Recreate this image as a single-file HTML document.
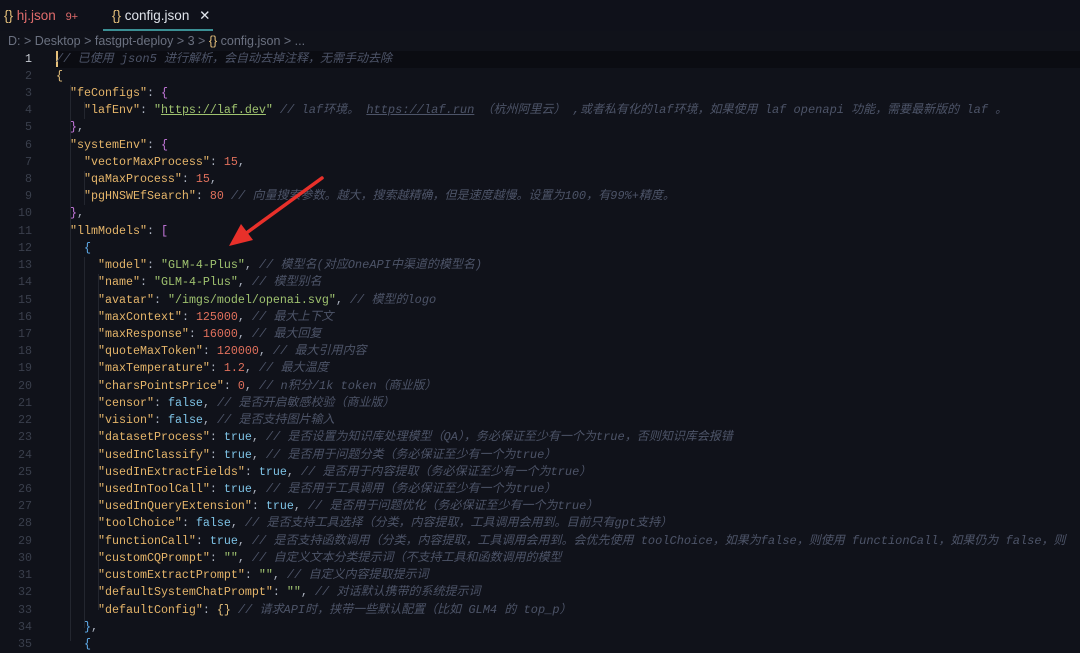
<!DOCTYPE html>
<html><head><meta charset="utf-8"><style>
html,body{margin:0;padding:0;width:1080px;height:641px;overflow:hidden;background:#10121a;font-family:"Liberation Sans","Noto Sans CJK SC",sans-serif}
.tabs{position:absolute;left:0;top:0;width:1080px;height:31px;background:#0f111a}
.tab{position:absolute;top:0;height:31px;line-height:31px;font-size:13.5px}
.bc{position:absolute;top:32px;left:8px;font-size:12.5px;color:#6b7180;line-height:18px;white-space:pre}
.ln{position:absolute;left:0;width:32px;text-align:right;font:11.67px/17.22px "Liberation Mono",monospace;color:#3a3f4c;top:50.5px}
.code{position:absolute;left:56px;top:50.5px;font:11.67px/17.22px "Liberation Mono","Noto Sans CJK SC",monospace;color:#abb2bf;white-space:pre}
.cur{position:absolute;left:56px;top:50.5px;width:1024px;height:17.22px;background:#0b0c12}
.k{color:#e5b56a}.s{color:#9fc26f}.n{color:#e0705c}.b{color:#7ec3e6}.c{color:#4d5468;font-style:italic;font-size:12px}
.y{color:#e5c07b}.p{color:#c678dd}.bl{color:#61afef}.u{text-decoration:underline}
.g{position:absolute;width:1px;background:#23262f}
</style></head><body>
<div class="tabs">
<div class="tab" style="left:4px;color:#e06c6c"><span style="color:#e5c07b">{}</span> hj.json <span style="font-size:11px;margin-left:6px">9+</span></div>
<div class="tab" style="left:112px;color:#dfe3ea"><span style="color:#e5c07b">{}</span> config.json <span style="margin-left:6px">✕</span></div>
<div style="position:absolute;left:103px;top:29px;width:110px;height:2px;background:#3b8f94"></div>
</div>
<div class="bc">D: &gt; Desktop &gt; fastgpt-deploy &gt; 3 &gt; <span style="color:#e5c07b">{}</span> config.json &gt; ...</div>
<div class="cur"></div>
<div style="position:absolute;left:56px;top:51px;width:2px;height:16px;background:#e5c07b"></div>
<div class="g" style="left:70px;top:85px;height:556px"></div>
<div class="g" style="left:84px;top:102px;height:17px"></div>
<div class="g" style="left:84px;top:171px;height:34px"></div>
<div class="g" style="left:84px;top:257px;height:371px"></div>
<div class="g" style="left:98px;top:274px;height:336px"></div>
<div class="ln"><span style="color:#c8ccd4">1</span><br>2<br>3<br>4<br>5<br>6<br>7<br>8<br>9<br>10<br>11<br>12<br>13<br>14<br>15<br>16<br>17<br>18<br>19<br>20<br>21<br>22<br>23<br>24<br>25<br>26<br>27<br>28<br>29<br>30<br>31<br>32<br>33<br>34<br>35</div>
<div class="code"><span class="c">// 已使用 json5 进行解析，会自动去掉注释，无需手动去除</span>
<span class="y">{</span>
  <span class="k">"feConfigs"</span>: <span class="p">{</span>
    <span class="k">"lafEnv"</span>: <span class="s">"<span class="u">https://laf.dev</span>"</span> <span class="c">// laf环境。 <span class="u">https://laf.run</span> （杭州阿里云） ,或者私有化的laf环境，如果使用 laf openapi 功能，需要最新版的 laf 。</span>
  <span class="p">}</span>,
  <span class="k">"systemEnv"</span>: <span class="p">{</span>
    <span class="k">"vectorMaxProcess"</span>: <span class="n">15</span>,
    <span class="k">"qaMaxProcess"</span>: <span class="n">15</span>,
    <span class="k">"pgHNSWEfSearch"</span>: <span class="n">80</span> <span class="c">// 向量搜索参数。越大，搜索越精确，但是速度越慢。设置为100，有99%+精度。</span>
  <span class="p">}</span>,
  <span class="k">"llmModels"</span>: <span class="p">[</span>
    <span class="bl">{</span>
      <span class="k">"model"</span>: <span class="s">"GLM-4-Plus"</span>, <span class="c">// 模型名(对应OneAPI中渠道的模型名)</span>
      <span class="k">"name"</span>: <span class="s">"GLM-4-Plus"</span>, <span class="c">// 模型别名</span>
      <span class="k">"avatar"</span>: <span class="s">"/imgs/model/openai.svg"</span>, <span class="c">// 模型的logo</span>
      <span class="k">"maxContext"</span>: <span class="n">125000</span>, <span class="c">// 最大上下文</span>
      <span class="k">"maxResponse"</span>: <span class="n">16000</span>, <span class="c">// 最大回复</span>
      <span class="k">"quoteMaxToken"</span>: <span class="n">120000</span>, <span class="c">// 最大引用内容</span>
      <span class="k">"maxTemperature"</span>: <span class="n">1.2</span>, <span class="c">// 最大温度</span>
      <span class="k">"charsPointsPrice"</span>: <span class="n">0</span>, <span class="c">// n积分/1k token（商业版）</span>
      <span class="k">"censor"</span>: <span class="b">false</span>, <span class="c">// 是否开启敏感校验（商业版）</span>
      <span class="k">"vision"</span>: <span class="b">false</span>, <span class="c">// 是否支持图片输入</span>
      <span class="k">"datasetProcess"</span>: <span class="b">true</span>, <span class="c">// 是否设置为知识库处理模型（QA），务必保证至少有一个为true，否则知识库会报错</span>
      <span class="k">"usedInClassify"</span>: <span class="b">true</span>, <span class="c">// 是否用于问题分类（务必保证至少有一个为true）</span>
      <span class="k">"usedInExtractFields"</span>: <span class="b">true</span>, <span class="c">// 是否用于内容提取（务必保证至少有一个为true）</span>
      <span class="k">"usedInToolCall"</span>: <span class="b">true</span>, <span class="c">// 是否用于工具调用（务必保证至少有一个为true）</span>
      <span class="k">"usedInQueryExtension"</span>: <span class="b">true</span>, <span class="c">// 是否用于问题优化（务必保证至少有一个为true）</span>
      <span class="k">"toolChoice"</span>: <span class="b">false</span>, <span class="c">// 是否支持工具选择（分类，内容提取，工具调用会用到。目前只有gpt支持）</span>
      <span class="k">"functionCall"</span>: <span class="b">true</span>, <span class="c">// 是否支持函数调用（分类，内容提取，工具调用会用到。会优先使用 toolChoice，如果为false，则使用 functionCall，如果仍为 false，则</span>
      <span class="k">"customCQPrompt"</span>: <span class="s">""</span>, <span class="c">// 自定义文本分类提示词（不支持工具和函数调用的模型</span>
      <span class="k">"customExtractPrompt"</span>: <span class="s">""</span>, <span class="c">// 自定义内容提取提示词</span>
      <span class="k">"defaultSystemChatPrompt"</span>: <span class="s">""</span>, <span class="c">// 对话默认携带的系统提示词</span>
      <span class="k">"defaultConfig"</span>: <span class="y">{}</span> <span class="c">// 请求API时，挟带一些默认配置（比如 GLM4 的 top_p）</span>
    <span class="bl">}</span>,
    <span class="bl">{</span></div>
<svg style="position:absolute;left:0;top:0" width="1080" height="641">
<line x1="322" y1="178" x2="245" y2="234" stroke="#e8302a" stroke-width="3.5" stroke-linecap="round"/>
<polygon points="229,246 241,224 253,240" fill="#e8302a"/>
</svg>
</body></html>
